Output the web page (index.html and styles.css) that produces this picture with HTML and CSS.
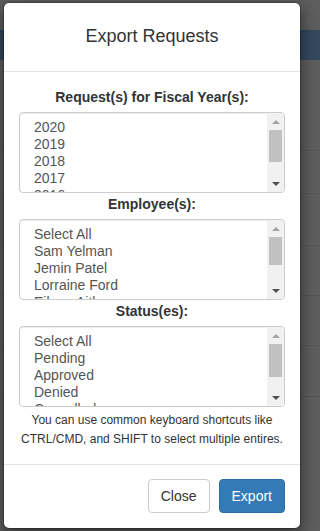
FILE: index.html
```html
<!DOCTYPE html>
<html lang="en">
<head>
<meta charset="utf-8">
<title>Export Requests</title>
<link rel="stylesheet" href="styles.css">
</head>
<body>
<div class="modal" role="dialog" aria-labelledby="modal-title">
  <div class="modal-header">
    <h4 class="modal-title" id="modal-title">Export Requests</h4>
  </div>
  <div class="modal-body">
    <div class="field">
      <label class="field-label" for="years">Request(s) for Fiscal Year(s):</label>
      <div class="listbox">
        <select id="years" class="list" multiple>
          <option>2020</option>
          <option>2019</option>
          <option>2018</option>
          <option>2017</option>
          <option>2016</option>
          <option>2015</option>
        </select>
        <div class="sbar" aria-hidden="true">
          <span class="sb-btn"><span class="arrow-up"></span></span>
          <span class="sb-track"><span class="sb-thumb" style="height:32px"></span></span>
          <span class="sb-btn"><span class="arrow-down"></span></span>
        </div>
      </div>
    </div>
    <div class="field">
      <label class="field-label" for="employees">Employee(s):</label>
      <div class="listbox">
        <select id="employees" class="list" multiple>
          <option>Select All</option>
          <option>Sam Yelman</option>
          <option>Jemin Patel</option>
          <option>Lorraine Ford</option>
          <option>Eileen Aitken</option>
          <option>&nbsp;</option>
          <option>&nbsp;</option>
        </select>
        <div class="sbar" aria-hidden="true">
          <span class="sb-btn"><span class="arrow-up"></span></span>
          <span class="sb-track"><span class="sb-thumb" style="height:28px"></span></span>
          <span class="sb-btn"><span class="arrow-down"></span></span>
        </div>
      </div>
    </div>
    <div class="field">
      <label class="field-label" for="statuses">Status(es):</label>
      <div class="listbox">
        <select id="statuses" class="list" multiple>
          <option>Select All</option>
          <option>Pending</option>
          <option>Approved</option>
          <option>Denied</option>
          <option>Cancelled</option>
          <option>&nbsp;</option>
        </select>
        <div class="sbar" aria-hidden="true">
          <span class="sb-btn"><span class="arrow-up"></span></span>
          <span class="sb-track"><span class="sb-thumb" style="height:33px"></span></span>
          <span class="sb-btn"><span class="arrow-down"></span></span>
        </div>
      </div>
    </div>
    <p class="help">You can use common keyboard shortcuts like CTRL/CMD, and SHIFT to select multiple entires.</p>
  </div>
  <div class="modal-footer">
    <button type="button" class="btn btn-default">Close</button>
    <button type="button" class="btn btn-primary">Export</button>
  </div>
</div>
</body>
</html>
```

FILE: styles.css
```css
html, body {
  margin: 0;
  padding: 0;
}

body {
  font-family: "Liberation Sans", Arial, Helvetica, sans-serif;
  font-size: 14px;
  line-height: 1.42857;
  color: #333;
  min-height: 531px;
  padding: 2px 0 0 3px;
  box-sizing: border-box;
  background:
    linear-gradient(to bottom,
      #5e5e5e 0, #5e5e5e 30px,
      #34495d 30px, #34495d 60px,
      #5e5e5e 60px, #5e5e5e 150px,
      #555 150px, #555 151px,
      #5e5e5e 151px, #5e5e5e 193px,
      #555 193px, #555 194px,
      #5e5e5e 194px, #5e5e5e 245px,
      #555 245px, #555 246px,
      #5e5e5e 246px, #5e5e5e 295px,
      #555 295px, #555 296px,
      #5e5e5e 296px, #5e5e5e 345px,
      #555 345px, #555 346px,
      #5e5e5e 346px, #5e5e5e 396px,
      #555 396px, #555 397px,
      #5e5e5e 397px);
}

.modal {
  width: 298px;
  box-sizing: border-box;
  background: #fff;
  border: 1px solid rgba(0, 0, 0, 0.2);
  border-radius: 6px;
  box-shadow: 0 5px 15px rgba(0, 0, 0, 0.5);
  background-clip: padding-box;
}

.modal-header {
  padding: 20px 15px 22px;
  border-bottom: 1px solid #e5e5e5;
}

.modal-title {
  margin: 0;
  font-size: 18px;
  font-weight: normal;
  line-height: 26px;
  text-align: center;
  color: #333;
}

.modal-body {
  padding: 15px 15px 15px;
}

.field {
  margin-bottom: 1px;
}

.field-label {
  display: block;
  margin-bottom: 5px;
  font-weight: bold;
  font-size: 14px;
  line-height: 20px;
  text-align: center;
  color: #333;
}

.listbox {
  position: relative;
}

.list {
  display: block;
  width: 100%;
  height: 81px;
  box-sizing: border-box;
  margin: 0;
  padding: 6px 12px;
  font-family: "Liberation Sans", Arial, Helvetica, sans-serif;
  font-size: 14px;
  color: #555;
  background: #fff;
  border: 1px solid #ccc;
  border-radius: 4px;
  box-shadow: inset 0 1px 1px rgba(0, 0, 0, 0.075);
  overflow: hidden;
  scrollbar-width: none;
  outline: none;
}

.list option {
  color: #555;
  padding: 0 2px;
  min-height: 0;
  height: 17px;
  line-height: 17px;
}

.sbar {
  position: absolute;
  top: 1px;
  right: 1px;
  bottom: 1px;
  width: 17px;
  display: flex;
  flex-direction: column;
  background: #f1f1f1;
  border-radius: 0 3px 3px 0;
}

.sb-btn {
  flex: 0 0 17px;
  display: flex;
  align-items: center;
  justify-content: center;
}

.sb-track {
  flex: 1 1 auto;
  display: flex;
  flex-direction: column;
  padding: 0 2px;
}

.sb-thumb {
  display: block;
  background: #c1c1c1;
}

.arrow-up {
  width: 0;
  height: 0;
  border-left: 4px solid transparent;
  border-right: 4px solid transparent;
  border-bottom: 4px solid #a3a3a3;
}

.arrow-down {
  width: 0;
  height: 0;
  border-left: 4px solid transparent;
  border-right: 4px solid transparent;
  border-top: 4px solid #505050;
}

.help {
  margin: 4px 0 0;
  font-size: 12px;
  line-height: 19px;
  text-align: center;
  color: #333;
}

.modal-footer {
  display: flex;
  justify-content: flex-end;
  gap: 9px;
  padding: 14px 15px 15px;
  border-top: 1px solid #e5e5e5;
}

.btn {
  display: inline-block;
  margin: 0;
  padding: 6px 12px;
  font-family: "Liberation Sans", Arial, Helvetica, sans-serif;
  font-size: 14px;
  line-height: 20px;
  border: 1px solid transparent;
  border-radius: 4px;
  cursor: pointer;
}

.btn-default {
  color: #333;
  background: #fff;
  border-color: #ccc;
}

.btn-primary {
  color: #fff;
  background: #337ab7;
  border-color: #2e6da4;
}
```
